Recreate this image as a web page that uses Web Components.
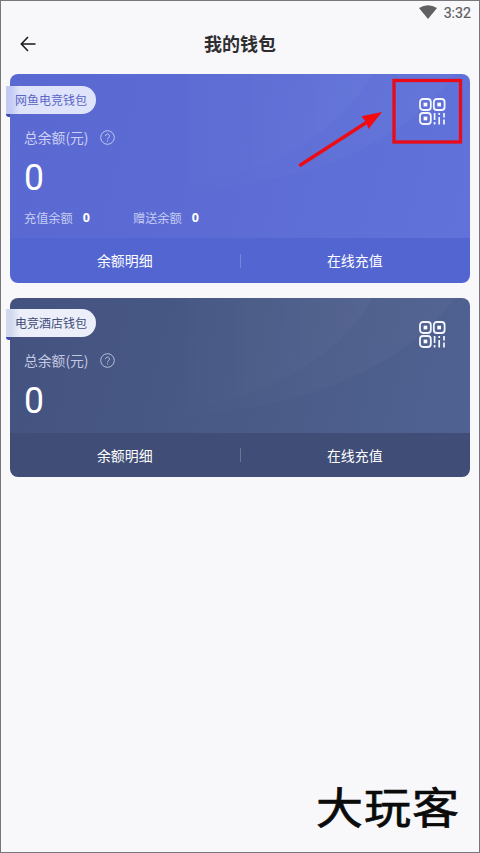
<!DOCTYPE html>
<html lang="zh-CN">
<head>
<meta charset="utf-8">
<title>我的钱包</title>
<style>
html,body{margin:0;height:100%}
body{font-family:"Noto Sans CJK SC","Noto Sans",sans-serif;overflow:hidden}
</style>
</head>
<body>
<wallet-page>
  <status-bar>3:32</status-bar>
  <title-bar>我的钱包</title-bar>
  <wallet-card theme="blue">
    <span slot="name">网鱼电竞钱包</span>
    <balance-item slot="detail" value="0">充值余额</balance-item>
    <balance-item slot="detail" value="0">赠送余额</balance-item>
  </wallet-card>
  <wallet-card theme="navy">
    <span slot="name">电竞酒店钱包</span>
  </wallet-card>
  <callout-mark slot="overlay"></callout-mark>
  <brand-mark slot="overlay">大玩客</brand-mark>
</wallet-page>
<script>
const define = (name, html, setup) => {
  customElements.define(name, class extends HTMLElement {
    constructor() {
      super();
      const t = document.createElement('template');
      t.innerHTML = html;
      this.attachShadow({mode: 'open'}).append(t.content.cloneNode(true));
    }
    connectedCallback() { if (setup) setup(this); }
  });
};

define('wallet-page', `
<style>
:host{display:block;position:relative;box-sizing:border-box;width:480px;height:853px;background:#f8f8fb;border:1px solid #77777b;overflow:hidden}
main{display:flex;flex-direction:column}
</style><main><slot></slot></main><slot name="overlay"></slot>`);

define('status-bar', `
<style>
:host{display:flex;height:23px;box-sizing:border-box;padding:0 8px 0 0;justify-content:flex-end;align-items:center;gap:7px;font:400 14.2px/22px Roboto,sans-serif;color:#5c5c5f}
svg{display:block;margin-bottom:1px}
span{-webkit-text-stroke:.2px #5c5c5f}
</style>
<svg width="18" height="14" viewBox="0 0 18 14"><path d="M0 3Q9-2.4 18 3L9 14Z" fill="#606063"/></svg><span><slot></slot></span>`);

define('title-bar', `
<style>
:host{display:grid;grid-template-columns:50px 1fr 50px;height:50px;box-sizing:border-box;padding-bottom:10px;align-items:center;color:#2e2e31}
svg{display:block;margin-left:19px}
h1{margin:-2px 0 0;text-align:center;font-size:18px;line-height:26px;font-weight:700}
</style>
<svg width="17" height="16" viewBox="0 0 17 16" fill="none" stroke="#17171a" stroke-width="1.5"><path d="M8 1 1.3 8 8 15M1.3 8H15.5"/></svg><h1><slot></slot></h1>`);

define('qr-icon', `
<style>:host{display:block;width:27px;height:27px}svg{display:block}</style>
<svg width="27" height="27" viewBox="0 0 27 27" fill="none" stroke="#f4f6ff">
<g stroke-width="1.8"><rect x="1" y="1" width="10.8" height="11" rx="3"/><rect x="14.8" y="1" width="10.8" height="11" rx="3"/><rect x="1" y="15" width="10.8" height="11" rx="3"/></g>
<g fill="#fff" stroke="none"><rect x="4.6" y="4.7" width="3.7" height="3.7"/><rect x="18.3" y="4.7" width="3.7" height="3.7"/><rect x="4.6" y="18.6" width="3.7" height="3.7"/></g>
<path stroke-width="1.7" d="M15.6 15v7m0 2v2.4M20.2 15v2m0 2v7.4M25 15v4.5m0 2v4.9"/></svg>`);

define('help-icon', `
<style>:host{display:block;width:15px;height:15px}svg{display:block}</style>
<svg width="15" height="15" viewBox="0 0 15 15" fill="none" stroke="currentColor" stroke-width=".9"><circle cx="7.5" cy="7.5" r="6.8"/><path d="M5.5 6a2 2 0 1 1 3.2 1.6c-.8.55-1.2.8-1.2 1.7M7.5 10.4v1.1"/></svg>`);

define('balance-item', `
<style>:host{display:flex;width:109px;align-items:center;gap:10px;font-size:12.2px;line-height:18px;color:#c5caf3}
b{font:700 12.5px/18px "Open Sans",sans-serif;color:#fff}</style>
<span><slot></slot></span><b></b>`, el => {
  el.shadowRoot.querySelector('b').textContent = el.getAttribute('value');
});

define('wallet-card', `
<style>
:host{display:flex;flex-direction:column;position:relative;margin:0 9px 15px;border-radius:8px;color:#fff;
 --top:linear-gradient(105deg,#5969d1,#5c6cd4 50%,#6173da);--foot:#5365d1;--ink:#5a66c8;--label:#cdd1f6;--mark:#3c4cb0;--h:164px;
 --b1:#e0e4fa;--b0:#c3cbf4}
:host([theme=navy]){--top:linear-gradient(105deg,#445280,#495a86 50%,#506292);--foot:#404d76;--ink:#414d78;--label:#c4cae2;--mark:#3a48bc;--h:135px;--b1:#eceffa;--b0:#d2d9ef}
.body{position:relative;height:var(--h);background:var(--top);border-radius:8px 8px 0 0;overflow:hidden;display:flex;flex-direction:column;box-sizing:border-box;padding:53px 14px 0}
:host([theme=navy]) .body{padding-top:52px}
.glow{position:absolute;left:0;top:0;width:460px;height:164px}
.badge{position:absolute;left:-4px;top:12px;width:90px;height:28px;box-sizing:border-box;padding-left:9px;border-radius:0 14px 14px 0;background:linear-gradient(90deg,var(--b0),var(--b0) 5px,var(--b1) 14px,var(--b1));color:var(--ink);font-size:12px;line-height:27px;white-space:nowrap}
:host([theme=navy]) .badge{top:11px}
.badge::after{content:"";position:absolute;left:0;top:28px;width:4px;height:3px;background:var(--mark);border-radius:0 0 0 3px}
.row{position:relative;display:flex;align-items:center;gap:11px;height:20px;font-size:13.8px;line-height:20px;color:var(--label)}
.amount{position:relative;font:400 37px/44px Roboto,sans-serif;margin-top:9px;height:44px}
.amount span{display:inline-block;transform:scaleX(.96);transform-origin:0 0}
.details{position:relative;display:flex;margin-top:9px}
qr-icon{position:absolute;right:24px;top:24px}
:host([theme=navy]) qr-icon{top:23px}
footer{height:45px;display:grid;grid-template-columns:1fr 1px 1fr;align-items:center;background:var(--foot);border-radius:0 0 8px 8px;text-align:center;font-size:13.9px;line-height:20px}
footer span{margin-top:-2px}
footer span:last-child{margin-right:1px}
:host([theme=navy]) footer{height:44px}
:host([theme=navy]) footer span{margin-top:-1px}
i{height:14px;width:1px;background:#ffffff38}
</style>
<div class="body">
 <svg class="glow" viewBox="0 0 460 164"><defs><linearGradient id="g" gradientUnits="userSpaceOnUse" x1="150" y1="0" x2="380" y2="0"><stop stop-color="#fff" stop-opacity="0"/><stop offset="1" stop-color="#fff" stop-opacity=".026"/></linearGradient></defs><path fill="url(#g)" d="M60 0V120C210 125 365 105 445 0Z"/><path fill="url(#g)" d="M60 0V118C180 125 305 95 363 0Z"/></svg>
 <div class="row"><span>总余额(元)</span><help-icon></help-icon></div>
 <div class="amount"><span>0</span></div>
 <div class="details"><slot name="detail"></slot></div>
 <qr-icon></qr-icon>
</div>
<footer><span>余额明细</span><i></i><span>在线充值</span></footer>
<div class="badge"><slot name="name"></slot></div>`);

define('callout-mark', `
<style>:host{position:absolute;left:297px;top:77px;pointer-events:none}svg{display:block}</style>
<svg width="166" height="92" viewBox="298 78 166 92"><rect x="394" y="80.5" width="66.5" height="61.5" fill="none" stroke="#e90c18" stroke-width="3.3"/><path d="M300.5 165 366 122.8" stroke="#ee0c14" stroke-width="3.4" stroke-linecap="round"/><path d="M382 112 361.5 116.2 366 122 368.5 129Z" fill="#f60a0d"/></svg>`);

define('brand-mark', `
<style>:host{position:absolute;left:315px;top:777px;width:146px;height:56px;font-size:47px;line-height:56px;font-weight:400;letter-spacing:1px;color:#0b0b0b;white-space:nowrap}
span{display:block;transform:scaleY(.91);-webkit-text-stroke:.8px #0b0b0b;stroke-linejoin:round}</style><span><slot></slot></span>`);
</script>
</body>
</html>
